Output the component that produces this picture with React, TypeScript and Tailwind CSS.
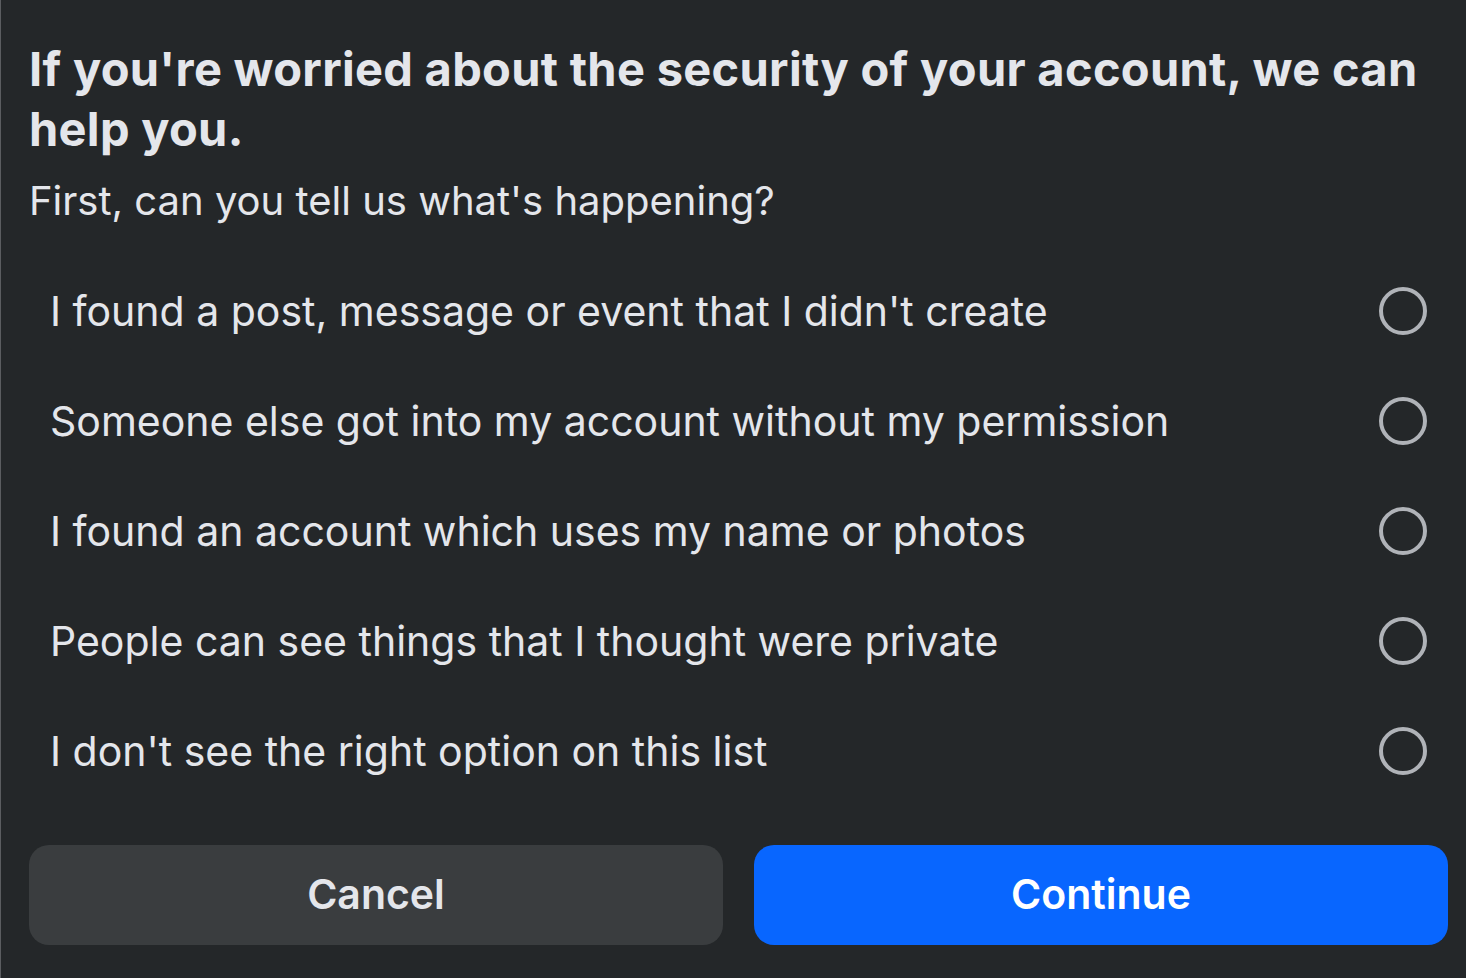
const options = [
  "I found a post, message or event that I didn't create",
  'Someone else got into my account without my permission',
  'I found an account which uses my name or photos',
  'People can see things that I thought were private',
  "I don't see the right option on this list",
];

export default function App() {
  return (
    <div
      className="min-h-[978px] w-full border-l border-[#5b5d60] bg-[#242729] pl-[28px] pr-[18px] pt-[39px] text-[#e4e6eb]"
      style={{ fontFamily: 'Inter, "Noto Sans", sans-serif' }}
    >
      <h1 className="pr-[10px] text-[47px] font-bold leading-[60px] tracking-[0.3px]">
        If you're worried about the security of your account, we can help you.
      </h1>
      <p className="mt-[18px] text-[40px] leading-[48px]">First, can you tell us what's happening?</p>

      <div className="mt-[31px]">
        {options.map((label) => (
          <label key={label} className="flex h-[110px] cursor-pointer items-center justify-between pl-[21px] pr-[21px]">
            <span className="text-[41px] leading-[48px]">{label}</span>
            <span className="h-[48px] w-[48px] rounded-full border-[4px] border-[#b0b3b8]" />
          </label>
        ))}
      </div>

      <div className="mt-[39px] grid grid-cols-2 gap-[31px]">
        <button className="h-[100px] rounded-[20px] bg-[#3a3d3f] text-[41px] font-semibold text-[#e4e6eb]">
          Cancel
        </button>
        <button className="h-[100px] rounded-[20px] bg-[#0866ff] text-[41px] font-semibold text-white">
          Continue
        </button>
      </div>
    </div>
  );
}
